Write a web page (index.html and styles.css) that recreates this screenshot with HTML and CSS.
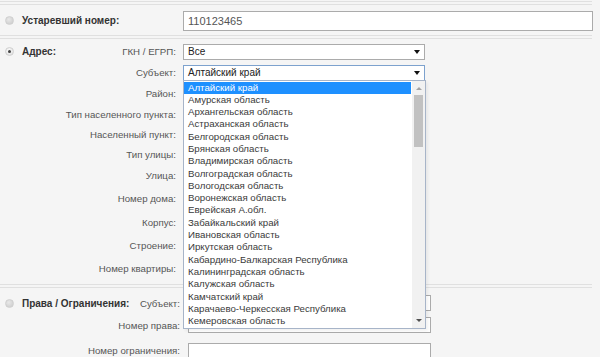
FILE: index.html
```html
<!DOCTYPE html>
<html lang="ru">
<head>
  <meta charset="UTF-8">
  <title>Поиск объекта</title>
  <link rel="stylesheet" href="styles.css">
</head>
<body>
  <div class="form">
    <div class="sep"></div>

    <div class="section sec-old">
      <div class="row">
        <div class="cell">
          <span class="head"><span class="radio"></span><b>Устаревший номер:</b></span>
        </div>
        <input class="text wide" type="text" value="110123465">
      </div>
    </div>

    <div class="sep"></div>

    <div class="section sec-addr">
      <div class="row">
        <div class="cell">
          <span class="head"><span class="radio on"></span><b>Адрес:</b></span>
          <span class="label">ГКН / ЕГРП:</span>
        </div>
        <div class="select"><span>Все</span><i class="arrow"></i></div>
      </div>
      <div class="row">
        <div class="cell"><span class="label">Субъект:</span></div>
        <div class="select focus"><span>Алтайский край</span><i class="arrow"></i>
          <ul class="listbox">
            <li class="active">Алтайский край</li>
            <li>Амурская область</li>
            <li>Архангельская область</li>
            <li>Астраханская область</li>
            <li>Белгородская область</li>
            <li>Брянская область</li>
            <li>Владимирская область</li>
            <li>Волгоградская область</li>
            <li>Вологодская область</li>
            <li>Воронежская область</li>
            <li>Еврейская А.обл.</li>
            <li>Забайкальский край</li>
            <li>Ивановская область</li>
            <li>Иркутская область</li>
            <li>Кабардино-Балкарская Республика</li>
            <li>Калининградская область</li>
            <li>Калужская область</li>
            <li>Камчатский край</li>
            <li>Карачаево-Черкесская Республика</li>
            <li>Кемеровская область</li>
            <li class="scroll"><i class="up"></i><i class="thumb"></i><i class="down"></i></li>
          </ul>
        </div>
      </div>
      <div class="row">
        <div class="cell"><span class="label">Район:</span></div>
        <div class="select"><span></span><i class="arrow"></i></div>
      </div>
      <div class="row h20">
        <div class="cell"><span class="label">Тип населенного пункта:</span></div>
        <div class="select"><span></span><i class="arrow"></i></div>
      </div>
      <div class="row h20">
        <div class="cell"><span class="label">Населенный пункт:</span></div>
        <input class="text" type="text">
      </div>
      <div class="row h20">
        <div class="cell"><span class="label">Тип улицы:</span></div>
        <div class="select"><span></span><i class="arrow"></i></div>
      </div>
      <div class="row h23">
        <div class="cell"><span class="label">Улица:</span></div>
        <input class="text" type="text">
      </div>
      <div class="row h23">
        <div class="cell"><span class="label">Номер дома:</span></div>
        <input class="text" type="text">
      </div>
      <div class="row h25">
        <div class="cell"><span class="label">Корпус:</span></div>
        <input class="text" type="text">
      </div>
      <div class="row">
        <div class="cell"><span class="label">Строение:</span></div>
        <input class="text" type="text">
      </div>
      <div class="row h25">
        <div class="cell"><span class="label">Номер квартиры:</span></div>
        <input class="text" type="text">
      </div>
    </div>

    <div class="sep"></div>

    <div class="section sec-rights">
      <div class="row h22">
        <div class="cell">
          <span class="head"><span class="radio"></span><b>Права / Ограничения:</b></span>
          <span class="label">Субъект:</span>
        </div>
        <input class="text" type="text">
      </div>
      <div class="row h22">
        <div class="cell"><span class="label">Номер права:</span></div>
        <input class="text" type="text">
      </div>
      <div class="row h28">
        <div class="cell"><span class="label">Номер ограничения:</span></div>
        <input class="text tall" type="text">
      </div>
    </div>
  </div>
</body>
</html>
```

FILE: styles.css
```css
:root {
  --bg: #f5f5f5;
  --label: #555;
  --title: #333;
  --border: #ababab;
  --focus: #7da2ce;
  --hl: #1e90ff;
}
body {
  margin: 0;
  background: var(--bg);
  font-family: "Liberation Sans", Arial, sans-serif;
  overflow: hidden;
}
.form {
  width: 593px;
  padding-top: 1px;
}
.sep {
  height: 2px;
  border-top: 1px solid #e0e0e0;
  border-bottom: 1px solid #e0e0e0;
  width: 592px;
}
.section {
  display: flex;
  flex-direction: column;
}
.sec-old {
  padding: 5px 0 4px;
}
.sec-addr {
  padding: 2px 0 3px;
}
.sec-rights {
  padding: 4px 0 0;
}
.row {
  display: flex;
  align-items: center;
  height: 21px;
}
.row.h20 { height: 20px; }
.row.h22 { height: 22px; }
.row.h23 { height: 23px; }
.row.h25 { height: 25px; }
.row.h28 { height: 28px; }
.cell {
  width: 176px;
  flex: none;
  display: flex;
  align-items: center;
  justify-content: space-between;
  margin-right: 7px;
}
.sec-rights .cell {
  width: 180px;
  margin-right: 8px;
}
.head {
  display: flex;
  align-items: center;
  padding-left: 5px;
  white-space: nowrap;
}
.head b {
  color: var(--title);
  font-size: 10px;
  font-weight: bold;
}
.label {
  color: var(--label);
  font-size: 9.7px;
  margin-left: auto;
  white-space: nowrap;
}
.radio {
  width: 9px;
  height: 9px;
  border-radius: 50%;
  background: radial-gradient(circle at 40% 35%, #e8e8e8, #c9c9c9);
  border: 1px solid #d0d0d0;
  box-sizing: border-box;
  margin-right: 8px;
  position: relative;
}
.radio.on {
  background: radial-gradient(circle at 40% 35%, #fafafa, #dcdcdc);
}
.radio.on::after {
  content: '';
  position: absolute;
  left: 2px;
  top: 2px;
  width: 3px;
  height: 3px;
  border-radius: 50%;
  background: #444;
}
.text {
  box-sizing: border-box;
  width: 243px;
  height: 16px;
  border: 1px solid var(--border);
  background: #fff;
  margin: 0;
  padding: 0 4px;
  font-family: inherit;
  font-size: 11px;
  color: #555;
}
.text.wide {
  width: 410px;
  height: 20px;
}
.text.tall {
  height: 20px;
  margin-top: 6px;
}
.select {
  box-sizing: border-box;
  width: 242px;
  height: 16px;
  border: 1px solid var(--border);
  background: #fff;
  display: flex;
  align-items: center;
  justify-content: space-between;
  padding: 0 4px 0 4px;
  font-size: 10px;
  color: #222;
  position: relative;
}
.select.focus {
  border-color: var(--focus);
}
.arrow {
  width: 0;
  height: 0;
  border-left: 3px solid transparent;
  border-right: 3px solid transparent;
  border-top: 4px solid #111;
}

/* open dropdown of the "Субъект" select */
.listbox {
  position: absolute;
  top: 14px;
  left: -1px;
  width: 243px;
  box-sizing: border-box;
  margin: 0;
  padding: 1px 14px 1px 0;
  list-style: none;
  background: #fff;
  border: 1px solid #a7b4c8;
  box-shadow: 2px 2px 3px rgba(0, 0, 0, 0.06);
  z-index: 5;
}
.listbox li {
  height: 12.3px;
  line-height: 12.3px;
  padding-left: 4px;
  font-size: 9.7px;
  color: #3a3a3a;
  white-space: nowrap;
}
.listbox li.active {
  background: var(--hl);
  color: #fff;
}
.listbox li.scroll {
  position: absolute;
  top: 0;
  right: 0;
  bottom: 0;
  width: 13px;
  height: auto;
  padding: 0;
  background: #f1f1f1;
}
.scroll .up, .scroll .down {
  position: absolute;
  left: 4px;
  width: 0;
  height: 0;
  border-left: 3px solid transparent;
  border-right: 3px solid transparent;
}
.scroll .up {
  top: 6px;
  border-bottom: 3px solid #a3a3a3;
}
.scroll .down {
  bottom: 6px;
  border-top: 3px solid #505050;
}
.scroll .thumb {
  position: absolute;
  top: 14px;
  left: 2px;
  width: 9px;
  height: 52px;
  background: #c1c1c1;
}
```
